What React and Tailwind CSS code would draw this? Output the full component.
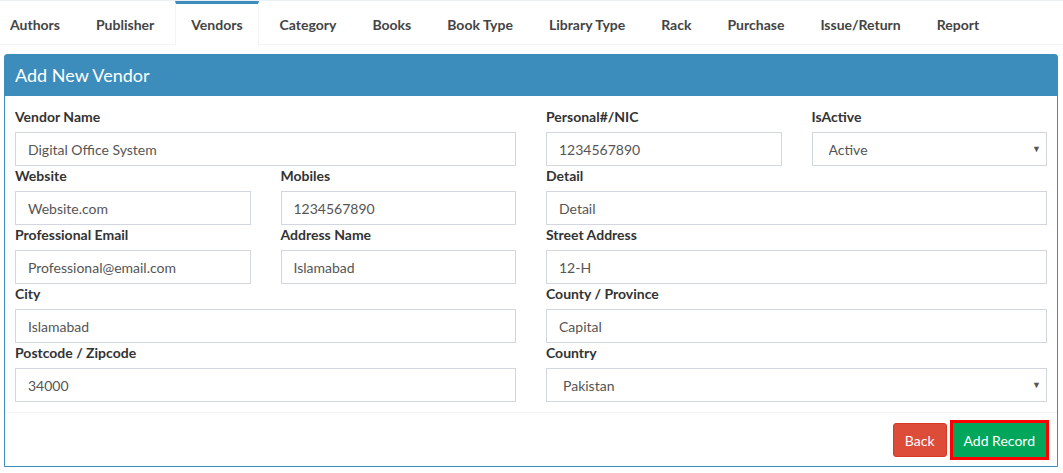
import { useState } from 'react';

const tabs = ['Authors', 'Publisher', 'Vendors', 'Category', 'Books', 'Book Type', 'Library Type', 'Rack', 'Purchase', 'Issue/Return', 'Report'];

const Field = ({ label, value, span = 1 }) => (
    <div className={span === 2 ? 'col-span-2' : 'col-span-1'}>
        <label className="block h-[20px] leading-[20px] mb-[5px] font-bold text-[14px] text-[#333]">{label}</label>
        <input
            readOnly
            value={value}
            className="block w-full h-[34px] border border-[#d2d6de] px-[12px] text-[14px] text-[#555] bg-white outline-none"
        />
    </div>
);

const SelectField = ({ label, value, span = 1 }) => (
    <div className={span === 2 ? 'col-span-2' : 'col-span-1'}>
        <label className="block h-[20px] leading-[20px] mb-[5px] font-bold text-[14px] text-[#333]">{label}</label>
        <div className="relative">
            <select
                defaultValue={value}
                className="block w-full h-[34px] border border-[#d2d6de] pl-[16px] pr-[24px] text-[14px] text-[#555] bg-white outline-none appearance-none"
            >
                <option>{value}</option>
            </select>
            {/* dropdown caret */}
            <span className="absolute right-[6px] top-[10px] text-[9px] text-[#555] pointer-events-none">▼</span>
        </div>
    </div>
);

export default function App() {
    const [active] = useState('Vendors');

    return (
        <div className="w-[1063px] h-[473px] bg-white overflow-hidden" style={{ fontFamily: 'Lato, "Open Sans", sans-serif' }}>
            {/* Tabs */}
            <div className="border-t-[1px] border-[#eceff3]">
                <ul className="flex h-[44px] border-b border-[#f4f4f4]">
                    {tabs.map((t, i) => (
                        <li
                            key={t}
                            className={`h-[44px] flex items-center text-[14px] font-bold text-[#444] mr-[6px] border-t-[3px] ${i === 0 ? 'pl-[10px] pr-[15px]' : 'px-[15px]'} ${
                                t === active ? 'bg-white border-t-[#3c8dbc] border-x border-x-[#f4f4f4] -mb-px h-[45px] pb-px' : 'border-t-transparent'
                            }`}
                        >
                            {t}
                        </li>
                    ))}
                </ul>
            </div>

            {/* Card */}
            <div className="mx-[4px] mt-[9px] w-[1054px] border border-[#3c8dbc] rounded-t-[3px]">
                <div className="h-[41px] bg-[#3c8dbc] flex items-center px-[10px] text-white text-[18px]">Add New Vendor</div>
                <div className="px-[10px] pt-[11px] pb-[10px]">
                    <div className="grid grid-cols-4 gap-x-[30px]">
                        <Field label="Vendor Name" value="Digital Office System" span={2} />
                        <Field label="Personal#/NIC" value="1234567890" />
                        <SelectField label="IsActive" value="Active" />

                        <Field label="Website" value="Website.com" />
                        <Field label="Mobiles" value="1234567890" />
                        <Field label="Detail" value="Detail" span={2} />

                        <Field label="Professional Email" value="Professional@email.com" />
                        <Field label="Address Name" value="Islamabad" />
                        <Field label="Street Address" value="12-H" span={2} />

                        <Field label="City" value="Islamabad" span={2} />
                        <Field label="County / Province" value="Capital" span={2} />

                        <Field label="Postcode / Zipcode" value="34000" span={2} />
                        <SelectField label="Country" value="Pakistan" span={2} />
                    </div>
                </div>
                <div className="border-t border-[#f4f4f4] pl-[10px] pr-[8px] pt-[7px] pb-[6px] flex justify-end items-center gap-[3px]">
                    <button className="h-[34px] px-[11px] bg-[#dd4b39] border border-[#d73925] rounded-[3px] text-white text-[14px]">Back</button>
                    <div className="border-[3px] border-[#ff0000]">
                        <button className="h-[34px] px-[11px] bg-[#00a65a] text-white text-[14px] block">Add Record</button>
                    </div>
                </div>
            </div>
        </div>
    );
}
